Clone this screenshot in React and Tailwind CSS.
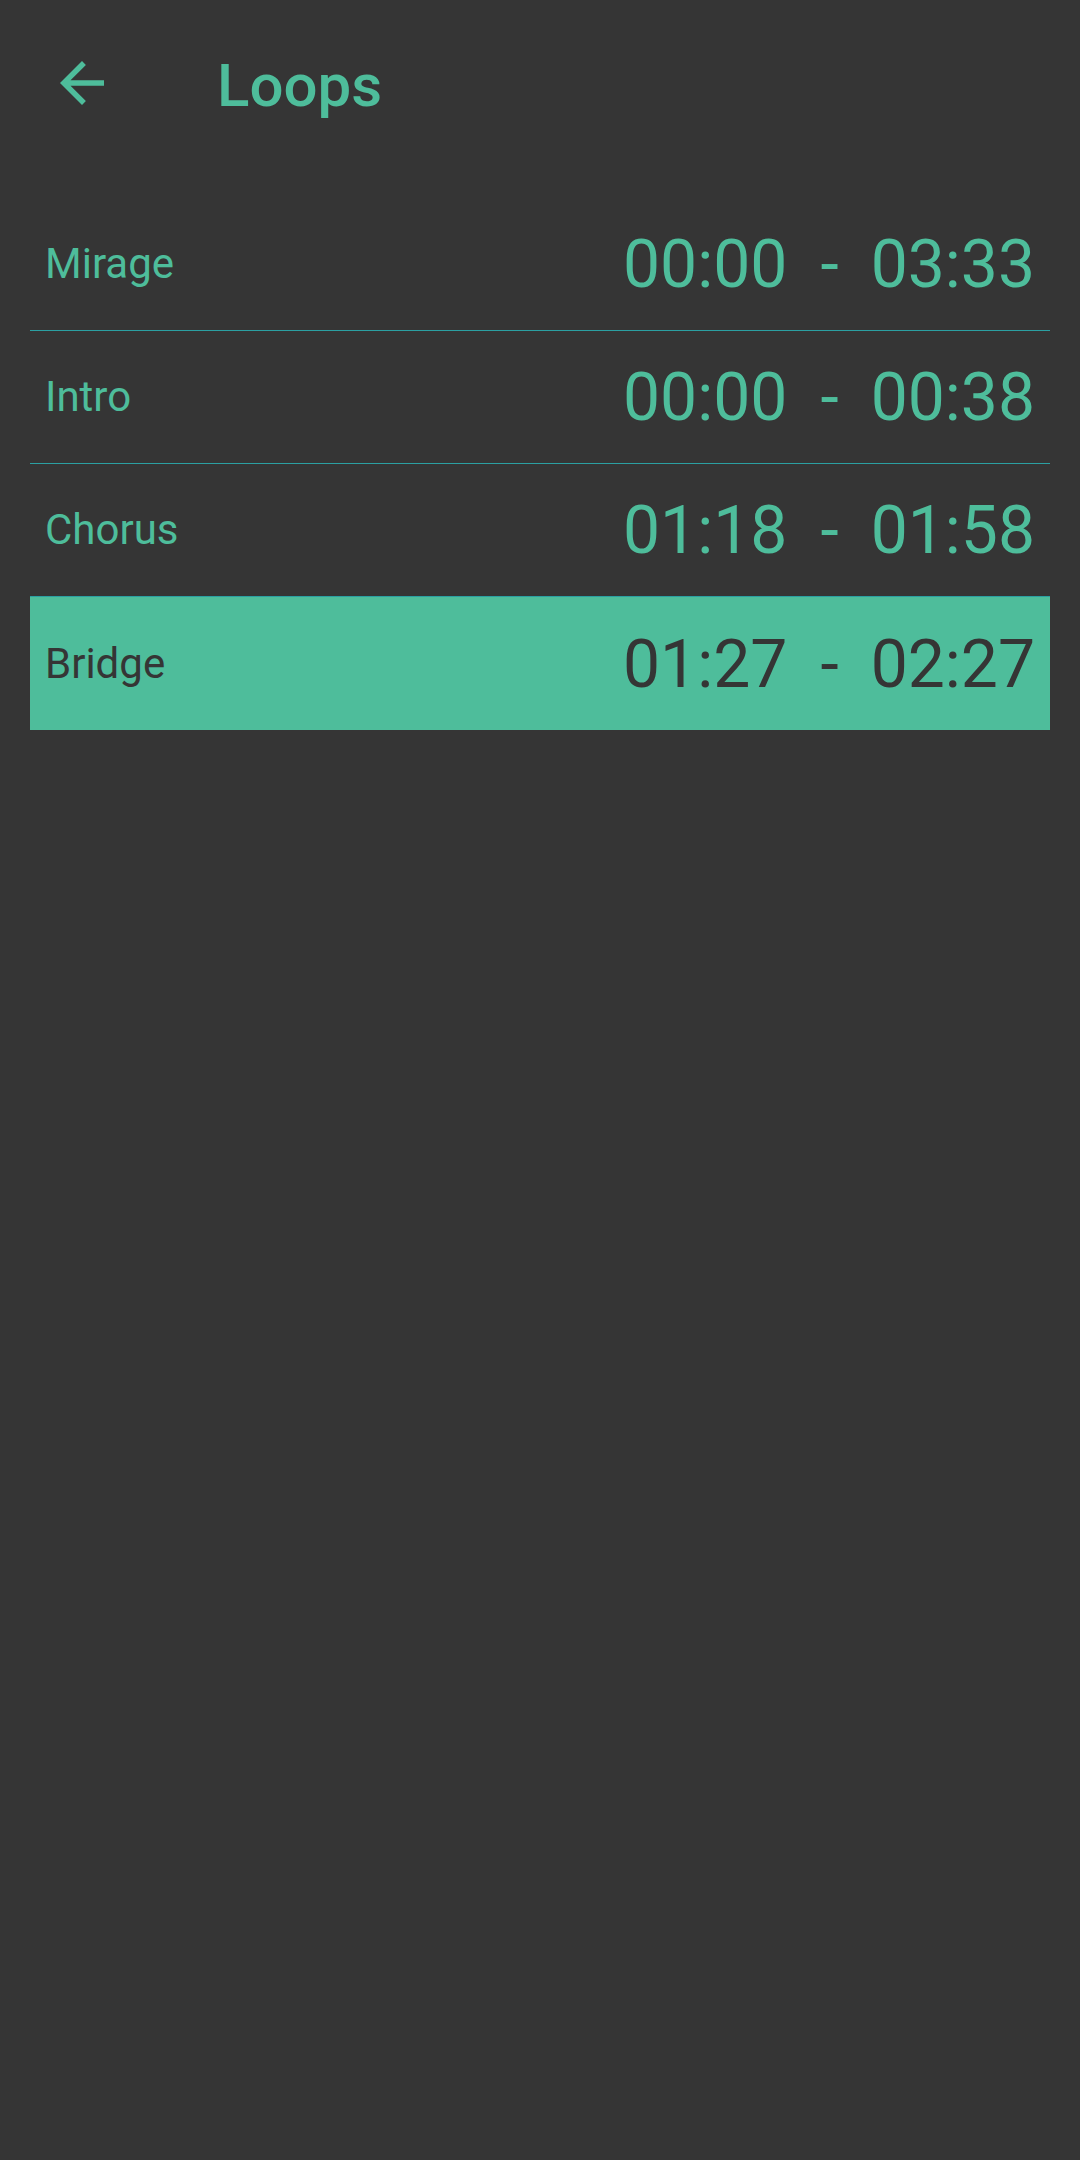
export default function App() {
  const rows = [
    { name: "Mirage", start: "00:00", end: "03:33" },
    { name: "Intro", start: "00:00", end: "00:38" },
    { name: "Chorus", start: "01:18", end: "01:58" },
    { name: "Bridge", start: "01:27", end: "02:27", active: true },
  ];
  return (
    <div className="w-[1080px] h-[2160px] bg-[#353535] font-['Roboto',sans-serif] text-[#4ebd9b]">
      <div className="h-[166px] flex items-center">
        <div className="ml-[49px] w-[66px] h-[66px] flex items-center justify-center">
          <svg width="66" height="66" viewBox="0 0 24 24" fill="currentColor">
            <path d="M20 11H7.83l5.59-5.59L12 4l-8 8 8 8 1.41-1.41L7.83 13H20v-2z" />
          </svg>
        </div>
        <span className="ml-[102px] mt-[5px] text-[60px] font-medium leading-none">Loops</span>
      </div>
      <div className="mt-[32px] mx-[30px]">
        {rows.map((r) => (
          <div
            key={r.name}
            className={
              r.active
                ? "h-[133px] flex items-center justify-between bg-[#4ebd9b] text-[#353535] pl-[15px] pr-[15px]"
                : "h-[133px] flex items-center justify-between border-b border-[#2ba0a2] pl-[15px] pr-[15px]"
            }
          >
            <span className="text-[42px] leading-none">{r.name}</span>
            <div className="flex items-center text-[66px] leading-none pt-[2px]">
              <span>{r.start}</span>
              <span className="ml-[33px]">-</span>
              <span className="ml-[32px]">{r.end}</span>
            </div>
          </div>
        ))}
      </div>
    </div>
  );
}
